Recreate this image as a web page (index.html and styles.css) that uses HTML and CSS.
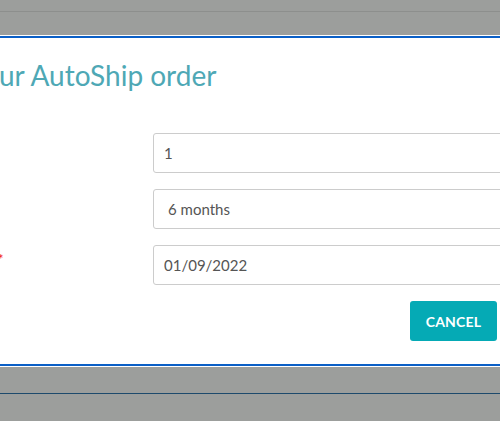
FILE: index.html
```html
<!DOCTYPE html>
<html>
<head>
<meta charset="utf-8">
<link rel="stylesheet" href="styles.css">
</head>
<body>
<div class="topbar"></div>
<div class="modal">
  <h2 class="title">ur AutoShip order</h2>
  <div class="form">
    <div class="label"></div>
    <div class="field"><input class="control" type="text" value="1"></div>
    <div class="label"></div>
    <div class="field"><div class="control select">6 months</div></div>
    <div class="label"><span class="req">*</span></div>
    <div class="field"><input class="control" type="text" value="01/09/2022"></div>
    <div class="label"></div>
    <div class="field actions">
      <button class="btn cancel">CANCEL</button>
    </div>
  </div>
</div>
<div class="bottombar"></div>
</body>
</html>
```
FILE: styles.css
```css
html, body {
  margin: 0;
  padding: 0;
}
body {
  width: 500px;
  height: 421px;
  overflow: hidden;
  background: #9c9e9c;
  font-family: Lato, "Open Sans", sans-serif;
}
.topbar {
  height: 11px;
  border-bottom: 1px solid #8d8f8d;
}
.modal {
  margin-top: 24px;
  width: 600px;
  height: 326px;
  background: #fff;
  border-top: 2px solid #0b5fc6;
  border-bottom: 2px solid #0b5fc6;
  box-shadow: 0 0 0 1px #fff;
  box-sizing: content-box;
}
.title {
  margin: 0;
  padding: 21px 0 0 0;
  margin-left: -1px;
  font-size: 28px;
  line-height: 32px;
  font-weight: 400;
  color: #4ea8b5;
}
.form {
  margin-top: 42px;
  display: grid;
  grid-template-columns: 153px 422px;
  row-gap: 16px;
}
.req {
  display: block;
  margin-left: -2px;
  padding-top: 8px;
  color: #f01818;
  font-size: 13px;
  line-height: 13px;
}
.control {
  box-sizing: border-box;
  width: 100%;
  height: 40px;
  margin: 0;
  border: 1px solid #cccccc;
  border-radius: 3px;
  padding: 0 10px;
  font-family: Lato, "Open Sans", sans-serif;
  font-size: 15px;
  color: #555555;
  background: #fff;
  outline: none;
}
.select {
  display: flex;
  align-items: center;
  padding-left: 14px;
}
.actions {
  display: flex;
  justify-content: flex-end;
  padding-right: 78px;
}
.btn {
  height: 40px;
  border: none;
  border-radius: 3px;
  background: #05aab5;
  color: #fff;
  font-family: Lato, "Open Sans", sans-serif;
  font-weight: 700;
  font-size: 14px;
  letter-spacing: 0.2px;
  padding: 0;
}
.cancel {
  width: 87px;
}
.bottombar {
  margin-top: 27px;
  border-top: 1px solid #1d4a6c;
}
```
